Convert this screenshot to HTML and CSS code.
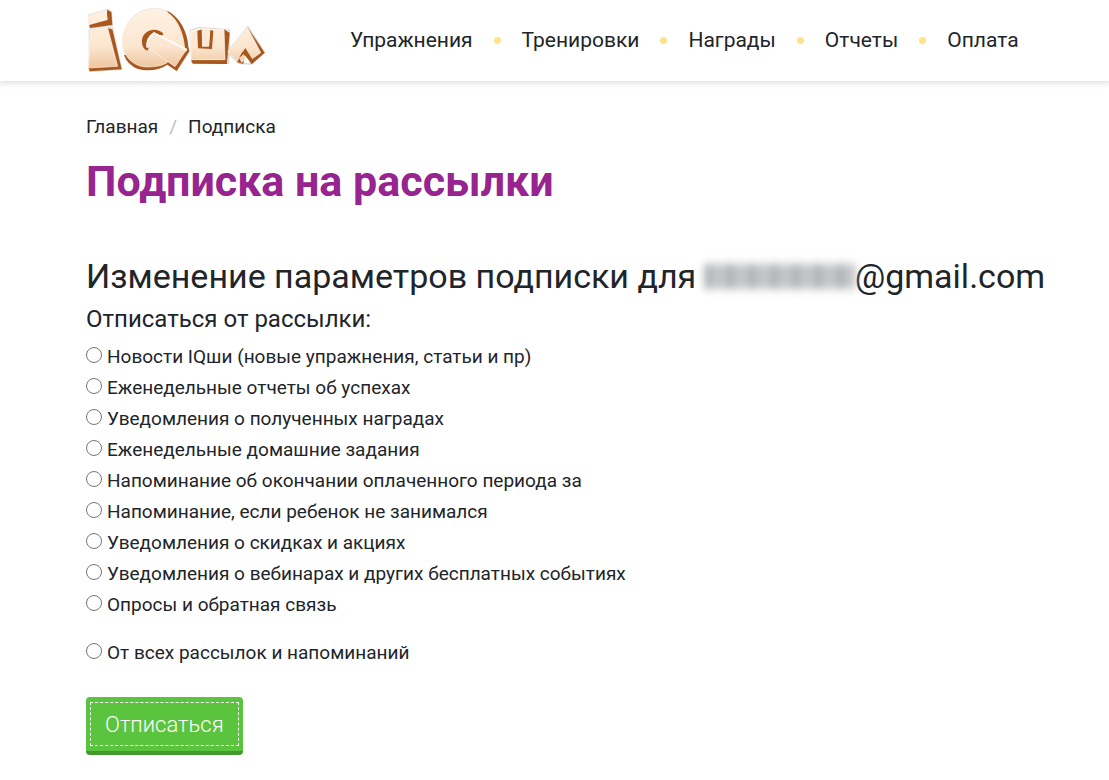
FILE: index.html
```html
<!DOCTYPE html>
<html lang="ru">
<head>
<meta charset="utf-8">
<meta name="viewport" content="width=device-width, initial-scale=1">
<title>Подписка на рассылки</title>
<link rel="stylesheet" href="styles.css">
</head>
<body>
<header class="header">
  <div class="container header-row">
    <a class="logo" href="#" aria-label="IQша">
      <svg viewBox="18 18 540 207" width="180" height="69" aria-hidden="true">
        <defs>
          <linearGradient id="wood" gradientUnits="userSpaceOnUse" x1="0" y1="30" x2="0" y2="210">
            <stop offset="0" stop-color="#fff1e2"/>
            <stop offset=".6" stop-color="#fce6d1"/>
            <stop offset="1" stop-color="#edc39a"/>
          </linearGradient>
        </defs>
        <g class="logo-glow">
          <path d="M25 46 82 29 94 36 97 76 30 84ZM28 90 97 82 125 208 28 214ZM225 26C275 26 318 75 323 140L327 154 290 212 262 192C245 206 220 210 190 207C150 201 130 165 128 130C128 70 170 27 225 26ZM330 91 360 82 448 90 446 190 335 188ZM442 156 504 80 554 158 514 192 476 190Z"/>
        </g>
        <g class="logo-edge">
          <path d="M26 66 78 56 82 29 94 36 97 75 30 84Z"/>
          <path d="M82 84 97 88 125 208 30 214 25 203Z"/>
          <path d="M262 32C300 52 322 94 325 140L328 154 290 213 262 194C240 209 215 213 188 210C160 206 140 188 132 165L300 140Z"/>
          <path d="M334 180 338 191 441 192 449 98 432 88 428 180Z"/>
          <path d="M503 82 554 158 515 193 506 180 494 166 490 192 472 187 466 170 484 150Z"/>
        </g>
        <g class="logo-face">
          <path d="M24 49 78 31 82 59 27 74Z"/>
          <path d="M31 90 83 84 113 199 25 204Z"/>
          <path d="M225 27C266 26 307 65 314 146L258 190C240 200 213 202 190 200C155 195 128 165 128 130C128 70 170 29 225 27Z"/>
          <path d="M331 93 432 88 435 179 334 179Z"/>
        </g>
        <path class="logo-edge" d="M248 98C222 78 188 94 186 120C185 134 189 147 202 152L210 138C204 116 222 102 250 106ZM352 92 366 88 366 140 387 140 390 90 400 92 396 147 354 145Z"/>
        <path class="logo-rim" d="M203 142C202 122 209 109 222 101L320 151"/>
        <g class="logo-face">
          <path d="M222 102 318 151 285 200 203 142C203 122 209 110 222 102Z"/>
          <path d="M366 85 390 84 386 135 368 135Z"/>
          <path d="M443 155 503 83 542 158 514 178 498 147 485 157 472 184Z"/>
        </g>
        <path class="logo-edge" d="M496 144 517 178 513 190 494 160 478 172Z"/>
        <path class="logo-face" d="M479 174 491 164 497 177 485 187Z"/>
      </svg>
    </a>
    <nav class="nav" aria-label="Основное меню">
      <ul class="nav-list">
        <li><a href="#">Упражнения</a></li>
        <li><a href="#">Тренировки</a></li>
        <li><a href="#">Награды</a></li>
        <li><a href="#">Отчеты</a></li>
        <li><a href="#">Оплата</a></li>
      </ul>
    </nav>
  </div>
</header>
<main class="container main">
  <nav class="crumbs" aria-label="Навигация">
    <a href="#">Главная</a><span class="crumb-sep">/</span><span>Подписка</span>
  </nav>
  <h1 class="title">Подписка на рассылки</h1>
  <h2 class="subtitle">Изменение параметров подписки для <span class="redacted" role="img" aria-label="скрыто"></span>@gmail.com</h2>
  <form class="form">
    <fieldset class="options">
      <legend class="legend">Отписаться от рассылки:</legend>
      <label class="option"><input type="radio" name="list" value="news">Новости IQши (новые упражнения, статьи и пр)</label>
      <label class="option"><input type="radio" name="list" value="reports">Еженедельные отчеты об успехах</label>
      <label class="option"><input type="radio" name="list" value="awards">Уведомления о полученных наградах</label>
      <label class="option"><input type="radio" name="list" value="homework">Еженедельные домашние задания</label>
      <label class="option"><input type="radio" name="list" value="expiry">Напоминание об окончании оплаченного периода за</label>
      <label class="option"><input type="radio" name="list" value="absence">Напоминание, если ребенок не занимался</label>
      <label class="option"><input type="radio" name="list" value="sales">Уведомления о скидках и акциях</label>
      <label class="option"><input type="radio" name="list" value="events">Уведомления о вебинарах и других бесплатных событиях</label>
      <label class="option"><input type="radio" name="list" value="polls">Опросы и обратная связь</label>
      <label class="option option-all"><input type="radio" name="list" value="all">От всех рассылок и напоминаний</label>
    </fieldset>
    <button class="submit" type="submit"><span class="submit-label">Отписаться</span></button>
  </form>
</main>
</body>
</html>
```
FILE: styles.css
```css
* { box-sizing: border-box; }
body {
  margin: 0;
  background: #fff;
  color: #212529;
  font-family: Roboto, "Open Sans", sans-serif;
  font-size: 19px;
  line-height: 31px;
}
a { color: inherit; text-decoration: none; }
.container { padding: 0 48px 0 86px; }
.header { box-shadow: 0 1px 6px 1px #e2ddd8; }
.header-row { display: flex; align-items: center; min-height: 81px; gap: 84px; }
.logo { display: flex; flex: none; }
.logo-glow { fill: #fff; stroke: #dedad6; stroke-width: 4; stroke-linejoin: round; }
.logo-edge { fill: #a9571d; }
.logo-rim { fill: none; stroke: #fff; stroke-width: 9; }
.logo-face { fill: url(#wood); stroke: #fff5e8; stroke-width: 2; stroke-linejoin: round; }
.nav-list { display: flex; margin: 0; padding: 0; list-style: none; font-size: 21px; }
.nav-list li { display: flex; align-items: center; }
.nav-list li + li::before {
  content: "";
  width: 7px;
  height: 7px;
  margin: 0 21px;
  border-radius: 50%;
  background: #ffe28a;
}
.main { padding-top: 30px; padding-bottom: 26px; }
.crumb-sep { margin: 0 11px; color: #b9bec3; }
.title { margin: 12px 0 0; color: #97248f; font-size: 43px; line-height: 54px; font-weight: 700; }
.subtitle { margin: 47px 0 0; font-size: 34px; line-height: 42px; font-weight: 400; }
.redacted {
  display: inline-block;
  width: 150px;
  height: 25px;
  background: repeating-linear-gradient(90deg, #9b9ea2 0 6px, #d0d2d4 6px 13px, #a8abae 13px 17px, #dcdedf 17px 22px);
  filter: blur(4px);
  vertical-align: -1px;
}
.options { display: flex; flex-direction: column; margin: 0; padding: 0; border: 0; }
.legend { padding: 6px 0; font-size: 24px; line-height: 32px; }
.option { display: flex; align-items: center; gap: 5px; }
.option input {
  flex: none;
  appearance: none;
  width: 16px;
  height: 16px;
  margin: 0 0 3px;
  border: 1px solid #767676;
  border-radius: 50%;
  background: #fff;
}
.option input:checked { border-width: 5px; }
.option-all { margin-top: 17px; }
.submit {
  margin-top: 29px;
  padding: 5px 4px;
  border: 0;
  border-bottom: 4px solid #42992c;
  border-radius: 4px;
  background: #5bc43e;
  color: #fff;
  font: 300 22px/40px Roboto, "Open Sans", sans-serif;
}
.submit-label { display: block; padding: 2px 14px 0; border: 1px dashed #fff; }
```
